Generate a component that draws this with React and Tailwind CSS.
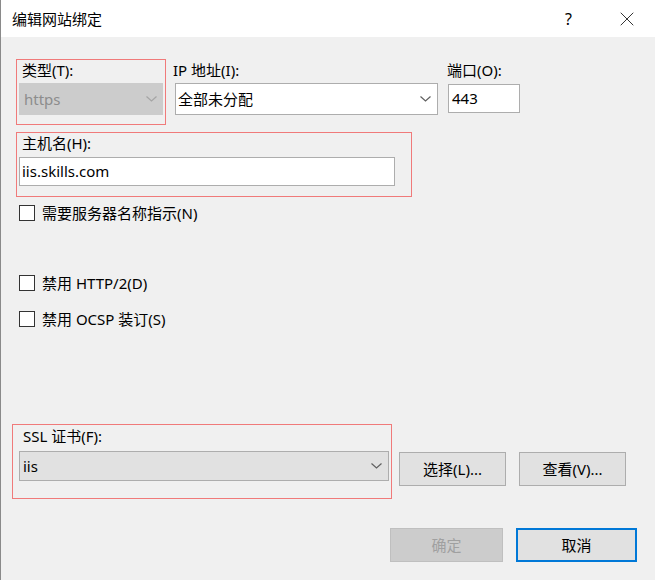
import { X } from "lucide-react";

const font = "font-['Noto_Sans','Noto_Sans_CJK_SC',sans-serif]";

const Chevron = ({ className = "" }) => (
  <svg width="11" height="6" viewBox="0 0 11 6" className={className}>
    <path d="M0.5 0.5 L5.5 5 L10.5 0.5" fill="none" stroke="currentColor" strokeWidth="1.2" />
  </svg>
);

const Checkbox = ({ label }) => (
  <div className="flex items-center h-[20px]">
    <div className="ml-[18px] w-[16px] h-[16px] border border-[#333] bg-white" />
    <span className="ml-[7px] text-[15px] leading-[20px] text-black">{label}</span>
  </div>
);

const Button = ({ children, className = "" }) => (
  <button
    type="button"
    className={`flex items-center justify-center bg-[#e1e1e1] border border-[#adadad] text-[15px] text-black ${className}`}
  >
    {children}
  </button>
);

export default function App() {
  return (
    <div className={`w-[655px] h-[580px] bg-[#f0f0f0] border-l border-[#8a8a8a] ${font} text-black overflow-hidden`}>
      {/* Title bar */}
      <div className="h-[37px] bg-white flex items-center">
        <span className="ml-[11px] text-[15px] leading-[20px]">编辑网站绑定</span>
        <span className="ml-auto text-[16px] leading-[20px] mr-[43px]">?</span>
        <X size={24} strokeWidth={0.8} className="mr-[16px]" />
      </div>

      {/* Row 1: type / ip / port */}
      <div className="flex items-start mt-[22px]">
        <div className="ml-[15px] w-[150px] h-[66px] border border-[#f07a7a]">
          <div className="ml-[5px] text-[15px] leading-[20px]">类型(T):</div>
          <div className="ml-[2px] mt-[3px] w-[144px] h-[32px] bg-[#cccccc] flex items-center pl-[5px] pr-[6px] text-[15px] text-[#8d8d8d]">
            <span>https</span>
            <Chevron className="ml-auto text-[#a5a5a5]" />
          </div>
        </div>
        <div className="ml-[7px] pt-[1px]">
          <div className="text-[15px] leading-[20px]">IP 地址(I):</div>
          <div className="ml-[2px] mt-[3px] w-[263px] h-[32px] bg-white border border-[#adadad] flex items-center pl-[2px] pr-[6px] text-[15px]">
            <span>全部未分配</span>
            <Chevron className="ml-auto text-[#606060]" />
          </div>
        </div>
        <div className="ml-[9px] pt-[1px]">
          <div className="text-[15px] leading-[20px]">端口(O):</div>
          <div className="ml-[1px] mt-[4px] w-[72px] h-[29px] bg-white border border-[#adadad] flex items-center pl-[3px] text-[15px]">
            443
          </div>
        </div>
      </div>

      {/* Row 2: host name */}
      <div className="ml-[15px] mt-[7px] w-[396px] h-[65px] border border-[#f07a7a]">
        <div className="ml-[5px] text-[15px] leading-[20px]">主机名(H):</div>
        <div className="ml-[2px] mt-[4px] w-[376px] h-[29px] bg-white border border-[#adadad] flex items-center pl-[2px] text-[15px]">
          iis.skills.com
        </div>
      </div>

      {/* Checkboxes */}
      <div className="mt-[6px]">
        <Checkbox label="需要服务器名称指示(N)" />
        <div className="mt-[50px]">
          <Checkbox label="禁用 HTTP/2(D)" />
        </div>
        <div className="mt-[16px]">
          <Checkbox label="禁用 OCSP 装订(S)" />
        </div>
      </div>

      {/* SSL certificate */}
      <div className="flex items-start mt-[95px]">
        <div className="ml-[11px] w-[380px] h-[75px] border border-[#f07a7a]">
          <div className="ml-[10px] mt-[1px] text-[15px] leading-[20px]">SSL 证书(F):</div>
          <div className="ml-[6px] mt-[5px] w-[370px] h-[30px] bg-[#e1e1e1] border border-[#adadad] flex items-center pl-[3px] pr-[6px] text-[15px]">
            <span>iis</span>
            <Chevron className="ml-auto text-[#606060]" />
          </div>
        </div>
        <Button className="ml-[7px] mt-[28px] w-[107px] h-[34px]">选择(L)...</Button>
        <Button className="ml-[13px] mt-[28px] w-[107px] h-[34px]">查看(V)...</Button>
      </div>

      {/* Bottom buttons */}
      <div className="flex mt-[29px]">
        <button
          type="button"
          className="ml-[389px] w-[113px] h-[34px] bg-[#cccccc] border border-[#bfbfbf] text-[15px] text-[#a0a0a0] flex items-center justify-center"
        >
          确定
        </button>
        <Button className="ml-[13px] w-[121px] h-[34px] !border-2 !border-[#0078d7]">取消</Button>
      </div>
    </div>
  );
}
